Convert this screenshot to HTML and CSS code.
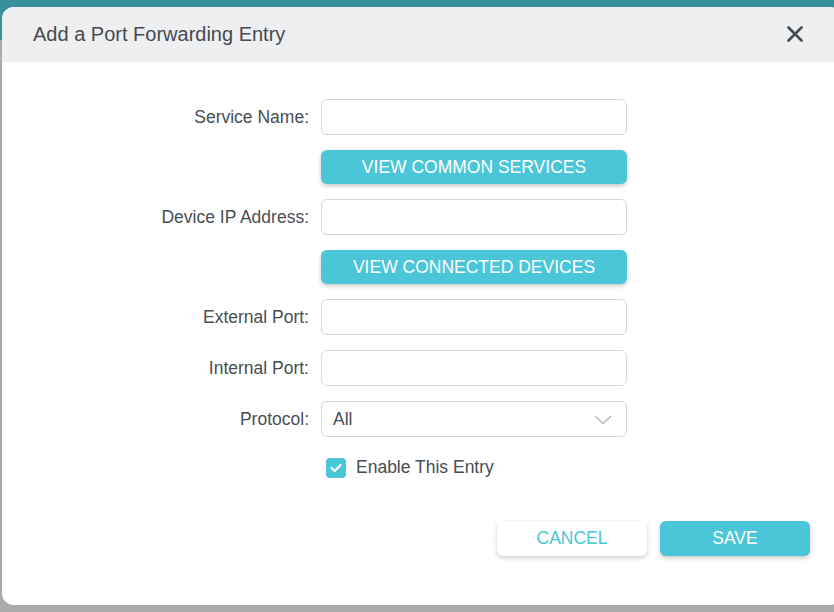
FILE: index.html
```html
<!DOCTYPE html>
<html lang="en">
<head>
    <meta charset="UTF-8">
    <title>Add a Port Forwarding Entry</title>
    <link rel="stylesheet" href="styles.css">
</head>
<body>
    <div class="dialog">
        <div class="dialog-head">
            <h1 class="dialog-title">Add a Port Forwarding Entry</h1>
            <button class="close-btn" aria-label="Close">
                <svg width="16" height="16" viewBox="0 0 16 16"><path d="M1.5 1.5 L14.5 14.5 M14.5 1.5 L1.5 14.5" stroke="#454b50" stroke-width="2.6" stroke-linecap="round"/></svg>
            </button>
        </div>
        <div class="dialog-body">
            <div class="form">
                <label class="form-label" for="serviceName">Service Name:</label>
                <input class="text-input" type="text" id="serviceName">

                <span></span>
                <button class="btn btn-primary">View Common Services</button>

                <label class="form-label" for="deviceIp">Device IP Address:</label>
                <input class="text-input" type="text" id="deviceIp">

                <span></span>
                <button class="btn btn-primary">View Connected Devices</button>

                <label class="form-label" for="externalPort">External Port:</label>
                <input class="text-input" type="text" id="externalPort">

                <label class="form-label" for="internalPort">Internal Port:</label>
                <input class="text-input" type="text" id="internalPort">

                <label class="form-label" for="protocol">Protocol:</label>
                <div class="select">
                    <span>All</span>
                    <svg width="18" height="10" viewBox="0 0 18 10"><path d="M1 1 L9 8.5 L17 1" fill="none" stroke="#b9bcbf" stroke-width="1.6"/></svg>
                </div>

                <span></span>
                <label class="check-row">
                    <span class="checkbox">
                        <svg width="12" height="10" viewBox="0 0 12 10"><path d="M1.5 5 L4.8 8 L10.5 2" fill="none" stroke="#fff" stroke-width="2.2" stroke-linecap="round" stroke-linejoin="round"/></svg>
                    </span>
                    Enable This Entry
                </label>
            </div>
            <div class="dialog-foot">
                <button class="btn btn-plain">Cancel</button>
                <button class="btn btn-primary">Save</button>
            </div>
        </div>
    </div>
</body>
</html>
```

FILE: styles.css
```css
html, body {
    height: 100%;
}
body {
    margin: 0;
    padding: 0;
    overflow: hidden;
    font-family: "Liberation Sans", Arial, sans-serif;
    background: linear-gradient(#3a8f9d 0, #3a8f9d 40px, #a9aaab 40px);
}
.dialog {
    margin: 7px 0 0 2px;
    width: 840px;
    height: 598px;
    background: white;
    border-radius: 12px;
    overflow: hidden;
}
.dialog-head {
    height: 55px;
    background-color: #eeeff0;
    display: flex;
    align-items: center;
    justify-content: space-between;
    padding: 0 39px 0 31px;
}
.dialog-title {
    margin: 0;
    font-size: 20px;
    font-weight: normal;
    color: #464b50;
}
.close-btn {
    background: none;
    border: none;
    padding: 0;
    width: 16px;
    height: 16px;
    display: flex;
    margin-top: -2px;
}
.dialog-body {
    padding-top: 37px;
}
.form {
    display: grid;
    grid-template-columns: 307px 306px;
    column-gap: 12px;
    row-gap: 15px;
    align-items: center;
}
.form-label {
    text-align: right;
    font-size: 17.5px;
    color: #494e52;
}
.text-input {
    box-sizing: border-box;
    height: 36px;
    width: 100%;
    border: 1px solid #d4d6d8;
    border-radius: 6px;
    padding: 0 12px;
    font-family: inherit;
    font-size: 17.5px;
    margin: 0;
}
.select {
    box-sizing: border-box;
    height: 36px;
    border: 1px solid #d4d6d8;
    border-radius: 6px;
    padding: 0 14px 0 11px;
    display: flex;
    align-items: center;
    justify-content: space-between;
    font-size: 17.5px;
    color: #494e52;
}
.select svg {
    margin-top: 2px;
}
.check-row {
    display: flex;
    align-items: center;
    gap: 10px;
    padding-left: 5px;
    margin-top: 5px;
    font-size: 17.5px;
    color: #494e52;
}
.checkbox {
    width: 20px;
    height: 20px;
    border-radius: 4px;
    background-color: #4bc5d8;
    display: flex;
    align-items: center;
    justify-content: center;
}
.btn {
    font-family: "Liberation Sans", Arial, sans-serif;
    font-size: 17.5px;
    text-transform: uppercase;
    border: none;
    border-radius: 6px;
    height: 34px;
    padding: 0;
    cursor: pointer;
}
.btn-primary {
    background-color: #4bc6d9;
    color: white;
    box-shadow: 0 2px 4px rgba(0, 0, 0, 0.22);
}
.btn-plain {
    background-color: white;
    color: #4bc6d9;
    box-shadow: 0 2px 5px rgba(0, 0, 0, 0.2);
}
.dialog-foot {
    display: flex;
    justify-content: flex-end;
    gap: 13px;
    padding-right: 32px;
    margin-top: 43px;
}
.dialog-foot .btn {
    width: 150px;
    height: 35px;
}
```
